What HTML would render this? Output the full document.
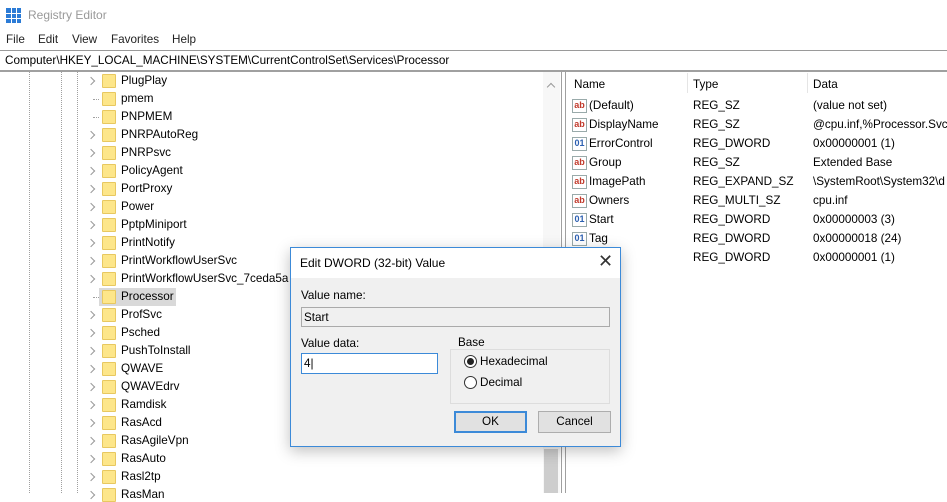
<!DOCTYPE html>
<html><head><style>
*{margin:0;padding:0;box-sizing:border-box}
body{width:947px;height:493px;overflow:hidden;background:#fff;font-family:"Liberation Sans",sans-serif;font-size:11.7px;color:#000;position:relative}
.a{position:absolute;white-space:nowrap}
.dl{position:absolute;width:0;border-left:1px dotted #a0a0a0}
.fold{position:absolute;width:14px;height:14px;background:#fde68a;border:1px solid #e8c860;border-radius:1px}
.chev{position:absolute;width:6px;height:6px;border-right:1.5px solid #999;border-top:1.5px solid #999;transform:rotate(45deg)}
.ic{position:absolute;width:15px;height:14px;border:1px solid #9aa;background:#fff;font-size:9px;font-weight:bold;line-height:11px;text-align:center}
</style></head><body>
<div class="a" style="left:6px;top:8px;width:15px;height:15px;background:#2b7bd6"></div>
<div class="a" style="left:6px;top:13px;width:15px;height:1px;background:#fff"></div>
<div class="a" style="left:6px;top:18px;width:15px;height:1px;background:#fff"></div>
<div class="a" style="left:11px;top:8px;width:1px;height:15px;background:#fff"></div>
<div class="a" style="left:16px;top:8px;width:1px;height:15px;background:#fff"></div>
<div class="a" style="left:28px;top:8px;font-size:12px;color:#999">Registry Editor</div>
<div class="a" style="left:6px;top:33px;color:#222">File</div>
<div class="a" style="left:38px;top:33px;color:#222">Edit</div>
<div class="a" style="left:72px;top:33px;color:#222">View</div>
<div class="a" style="left:111px;top:33px;color:#222">Favorites</div>
<div class="a" style="left:172px;top:33px;color:#222">Help</div>
<div class="a" style="left:0;top:50px;width:947px;height:1px;background:#9a9a9a"></div>
<div class="a" style="left:5px;top:54px">Computer\HKEY_LOCAL_MACHINE\SYSTEM\CurrentControlSet\Services\Processor</div>
<div class="a" style="left:0;top:70px;width:947px;height:2px;background:#a0a0a0"></div>
<div class="dl" style="left:29px;top:72px;height:421px"></div>
<div class="dl" style="left:61px;top:72px;height:421px"></div>
<div class="dl" style="left:77px;top:72px;height:421px"></div>
<div id="tree"></div>
<div class="a" style="left:543px;top:72px;width:17px;height:421px;background:#f7f7f7"></div>
<div class="chev" style="left:548px;top:84px;transform:rotate(-45deg)"></div>
<div class="a" style="left:544px;top:449px;width:14px;height:44px;background:#cdcdcd"></div>
<div class="a" style="left:561px;top:72px;width:1px;height:421px;background:#a0a0a0"></div>
<div class="a" style="left:565px;top:72px;width:1px;height:421px;background:#a0a0a0"></div>
<div class="a" style="left:574px;top:78px">Name</div>
<div class="a" style="left:687px;top:73px;width:1px;height:20px;background:#e5e5e5"></div>
<div class="a" style="left:693px;top:78px">Type</div>
<div class="a" style="left:807px;top:73px;width:1px;height:20px;background:#e5e5e5"></div>
<div class="a" style="left:813px;top:78px">Data</div>
<div id="vals"></div>
<div class="a" style="left:290px;top:247px;width:331px;height:200px;background:#f0f0f0;border:1px solid #3c8ad8;box-shadow:0 4px 14px rgba(0,0,0,.25)">
 <div class="a" style="left:0;top:0;width:329px;height:30px;background:#fff"></div>
 <div class="a" style="left:9px;top:8px;font-size:12px">Edit DWORD (32-bit) Value</div>
 <div class="a" style="left:307px;top:3px;font-size:18px;color:#333">✕</div>
 <div class="a" style="left:10px;top:41px">Value name:</div>
 <div class="a" style="left:10px;top:59px;width:309px;height:20px;border:1px solid #aaa;background:#f0f0f0;padding:3px 2px">Start</div>
 <div class="a" style="left:10px;top:89px">Value data:</div>
 <div class="a" style="left:10px;top:105px;width:137px;height:21px;border:1px solid #3c8ad8;background:#fff;padding:3px 2px">4|</div>
 <div class="a" style="left:159px;top:101px;width:160px;height:55px;border:1px solid #ddd"></div>
 <div class="a" style="left:165px;top:88px;background:#f0f0f0;padding:0 2px">Base</div>
 <div class="a" style="left:173px;top:107px;width:13px;height:13px;border:1px solid #333;border-radius:50%;background:#fff"><div style="margin:2px;width:7px;height:7px;border-radius:50%;background:#222"></div></div>
 <div class="a" style="left:189px;top:107px">Hexadecimal</div>
 <div class="a" style="left:173px;top:128px;width:13px;height:13px;border:1px solid #333;border-radius:50%;background:#fff"></div>
 <div class="a" style="left:189px;top:128px">Decimal</div>
 <div class="a" style="left:163px;top:163px;width:73px;height:22px;border:2px solid #3c8ad8;background:#e1e1e1;text-align:center;line-height:18px">OK</div>
 <div class="a" style="left:247px;top:163px;width:73px;height:22px;border:1px solid #adadad;background:#e1e1e1;text-align:center;line-height:20px">Cancel</div>
</div>
<script>
var n=["PlugPlay","pmem","PNPMEM","PNRPAutoReg","PNRPsvc","PolicyAgent","PortProxy","Power","PptpMiniport","PrintNotify","PrintWorkflowUserSvc","PrintWorkflowUserSvc_7ceda5a","Processor","ProfSvc","Psched","PushToInstall","QWAVE","QWAVEdrv","Ramdisk","RasAcd","RasAgileVpn","RasAuto","Rasl2tp","RasMan"];
var noch={1:1,2:1,12:1},h="";
n.forEach(function(t,i){var c=81+i*18;
 if(i==12)h+='<div class="a" style="left:99px;top:'+(c-9)+'px;width:77px;height:18px;background:#d9d9d9"></div>';
 if(noch[i])h+='<div class="dl" style="left:93px;top:'+c+'px;width:6px;height:0;border-left:0;border-top:1px dotted #a0a0a0"></div>';
 else h+='<div class="chev" style="left:88px;top:'+(c-3)+'px"></div>';
 h+='<div class="fold" style="left:102px;top:'+(c-7)+'px"></div><div class="a" style="left:121px;top:'+(c-7)+'px">'+t+'</div>';});
document.getElementById("tree").innerHTML=h;
var v=[["ab","(Default)","REG_SZ","(value not set)"],["ab","DisplayName","REG_SZ","@cpu.inf,%Processor.Svc"],["01","ErrorControl","REG_DWORD","0x00000001 (1)"],["ab","Group","REG_SZ","Extended Base"],["ab","ImagePath","REG_EXPAND_SZ","\\SystemRoot\\System32\\d"],["ab","Owners","REG_MULTI_SZ","cpu.inf"],["01","Start","REG_DWORD","0x00000003 (3)"],["01","Tag","REG_DWORD","0x00000018 (24)"],["01","Type","REG_DWORD","0x00000001 (1)"]];
h="";v.forEach(function(r,i){var t=99+i*19;
 h+='<div class="ic" style="left:572px;top:'+(t)+'px;color:'+(r[0]=="ab"?"#c0392b":"#2b5fb0")+'">'+r[0]+'</div><div class="a" style="left:589px;top:'+t+'px">'+r[1]+'</div><div class="a" style="left:693px;top:'+t+'px">'+r[2]+'</div><div class="a" style="left:813px;top:'+t+'px">'+r[3]+'</div>';});
document.getElementById("vals").innerHTML=h;
</script>
</body></html>
